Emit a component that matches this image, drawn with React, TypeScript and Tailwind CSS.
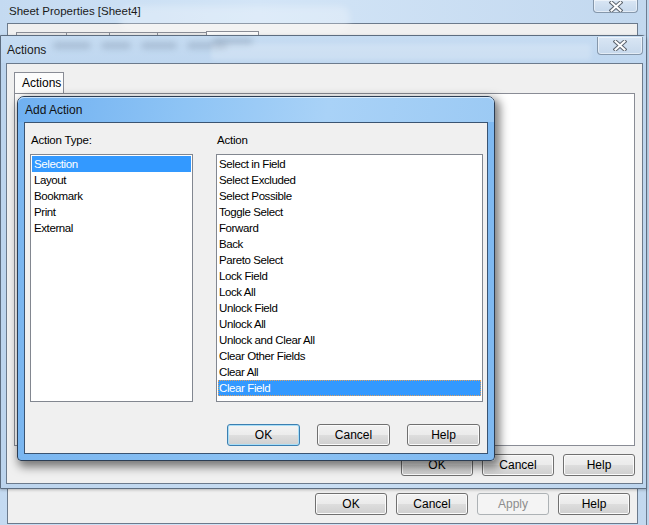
import React from 'react';

const FONT = "font-['Liberation_Sans',Arial,sans-serif]";

const actionTypes = ['Selection', 'Layout', 'Bookmark', 'Print', 'External'];
const actions = [
  'Select in Field',
  'Select Excluded',
  'Select Possible',
  'Toggle Select',
  'Forward',
  'Back',
  'Pareto Select',
  'Lock Field',
  'Lock All',
  'Unlock Field',
  'Unlock All',
  'Unlock and Clear All',
  'Clear Other Fields',
  'Clear All',
  'Clear Field',
];

type BtnKind = 'normal' | 'default' | 'disabled';

const Button: React.FC<{ label: string; kind?: BtnKind; wide?: boolean }> = ({ label, kind = 'normal', wide }) => {
  const base = `h-[22px] ${wide ? 'w-[73px]' : 'w-[72px]'} rounded-[3px] border text-[12px] leading-none flex items-center justify-center`;
  if (kind === 'disabled') {
    return <div className={`${base} border-[#adb2b5] bg-[#f4f4f4] text-[#8d8d8d]`}>{label}</div>;
  }
  if (kind === 'default') {
    return (
      <div className={`${base} border-[#3c7fb1] bg-[linear-gradient(#f4f4f4_0%,#ececec_48%,#dedede_52%,#d0d0d0_100%)] text-black shadow-[inset_0_0_0_1px_#a9def7]`}>
        {label}
      </div>
    );
  }
  return (
    <div className={`${base} border-[#707070] bg-[linear-gradient(#f2f2f2_0%,#ebebeb_48%,#dddddd_52%,#cfcfcf_100%)] text-black shadow-[inset_0_0_0_1px_#fbfbfb]`}>
      {label}
    </div>
  );
};

const CloseButton: React.FC<{ className?: string }> = ({ className = '' }) => (
  <div className={`flex items-center justify-center rounded-b-[4px] border border-t-0 border-[#8597ab] bg-[linear-gradient(#d9e6f4,#c6d8ec)] shadow-[inset_0_0_0_1px_rgba(255,255,255,0.5)] ${className}`}>
    <svg width="14" height="11" viewBox="0 0 14 11">
      <path d="M2.5 1.5 L11.5 9.5 M11.5 1.5 L2.5 9.5" stroke="#5e6670" strokeWidth="4" strokeLinecap="square" />
      <path d="M2.5 1.5 L11.5 9.5 M11.5 1.5 L2.5 9.5" stroke="#ffffff" strokeWidth="2" strokeLinecap="square" />
    </svg>
  </div>
);

const ListBox: React.FC<{ items: string[]; selected: string; focus?: boolean; width: string; indent: string }> = ({
  items,
  selected,
  focus,
  width,
  indent,
}) => (
  <div className={`${width} h-[248px] border border-[#828790] bg-white p-[1px]`}>
    {items.map(item => {
      const sel = item === selected;
      return (
        <div
          key={item}
          className={`h-[16px] ${indent} pt-[1px] flex items-center whitespace-nowrap text-[11.5px] tracking-[-0.4px] ${
            sel ? 'bg-[#3399ff] text-white' : 'text-black'
          } ${sel && focus ? 'outline-1 outline-dotted outline-[#e0a060] -outline-offset-1' : ''}`}
        >
          {item}
        </div>
      );
    })}
  </div>
);

export default function App() {
  return (
    <div className={`relative w-[649px] h-[525px] overflow-hidden bg-[#bfd5ec] ${FONT} text-[12px] text-black`}>
      {/* Sheet Properties (back window) */}
      <div className="absolute left-0 top-0 w-[647px] h-[534px] border-r border-[#6c7d92] bg-[linear-gradient(90deg,#c4daf1,#d3e5f7_40%,#c2d8ef)] flex flex-col">
        <div className="relative h-[23px] flex items-center pl-[9px]">
          <span className="relative z-10 text-[11.5px] text-[#1a1a1a]">Sheet Properties [Sheet4]</span>
          <div className="absolute left-[120px] top-[6px] w-[230px] h-[26px] rounded-[10px] bg-white/25 blur-[3px]" />
          <CloseButton className="absolute left-[593px] top-0 w-[45px] h-[13px]" />
        </div>
        <div className="ml-[7px] mr-[8px] h-[501px] border border-[#6b7a8c] bg-[#f0f0f0] flex flex-col">
          <div className="relative h-[13px]">
            <div className="absolute left-[8px] top-[8px] flex">
              {[50, 43, 48, 49].map((w, i) => (
                <div key={i} style={{ width: w }} className="h-[6px] border-l border-t border-[#898c95] bg-[#e8e8e8]" />
              ))}
              <div className="-mt-[1px] w-[53px] h-[7px] border border-b-0 border-[#898c95] bg-[#fafafa]" />
            </div>
          </div>
          <div className="flex-1" />
          <div className="flex justify-end gap-[9px] pr-[7px] pb-[8px]">
            <Button label="OK" />
            <Button label="Cancel" />
            <Button label="Apply" kind="disabled" />
            <Button label="Help" />
          </div>
        </div>
      </div>

      {/* Actions (middle window) */}
      <div className="absolute left-0 top-[35px] w-[647px] h-[454px] rounded-tr-[5px] border border-[#5d6d80] bg-[linear-gradient(90deg,#bcd4ed,#c9def3_50%,#bdd5ee)] shadow-[0_1px_3px_rgba(0,0,0,0.25)] flex flex-col">
        <div className="relative h-[27px] flex items-center pl-[6px] bg-[linear-gradient(#c6dcf2,#bfd7f0)]">
          <span className="relative z-10 text-[12px] text-[#1a1a1a]">Actions</span>
          <div className="absolute left-[52px] top-[6px] flex gap-[10px] opacity-40">
            {[38, 30, 36, 40].map((w, i) => (
              <div key={i} style={{ width: w }} className="h-[7px] rounded-full bg-[#7f93aa] blur-[3px]" />
            ))}
          </div>
          <div className="absolute left-[212px] top-[2px] w-[40px] h-[7px] rounded-full bg-[#7f93aa] opacity-40 blur-[3px]" />
          <div className="absolute left-[210px] top-[8px] w-[380px] h-[16px] rounded-[3px] bg-white/20 blur-[2px]" />
          <CloseButton className="absolute left-[596px] top-[1px] w-[46px] h-[18px]" />
        </div>
        <div className="ml-[5px] mr-[3px] h-[421px] border border-[#6b7a8c] bg-[#f0f0f0] flex flex-col px-[7px] pt-[8px]">
          <div className="flex">
            <div className="h-[21px] w-[50px] border border-b-0 border-[#898c95] bg-[#fcfcfc] flex items-center pl-[7px] text-[12px]">
              Actions
            </div>
          </div>
          <div className="h-[353px] border border-[#898c95] bg-white" />
          <div className="flex justify-end gap-[9px] pt-[8px]">
            <Button label="OK" />
            <Button label="Cancel" />
            <Button label="Help" />
          </div>
        </div>
      </div>

      {/* Add Action (front window) */}
      <div className="absolute left-[17px] top-[96px] w-[478px] h-[365px] rounded-t-[7px] rounded-b-[4px] border border-[#2b3d54] bg-[linear-gradient(90deg,#7ab6f0,#8cc2f3_50%,#7fb9f1)] shadow-[3px_4px_10px_2px_rgba(0,0,0,0.5)] flex flex-col">
        <div className="h-[25px] rounded-t-[6px] flex items-center pl-[7px] bg-[linear-gradient(100deg,#6fb0f1,#8ec4f5_35%,#a9d2f7_65%,#9ccaf4)] shadow-[inset_0_1px_0_rgba(255,255,255,0.6)]">
          <span className="text-[12px] text-[#111]">Add Action</span>
        </div>
        <div className="ml-[6px] mr-[6px] h-[332px] border border-[#3a5472] bg-[#f0f0f0] flex flex-col pl-[5px] pr-[5px] pt-[10px]">
          <div className="flex gap-[23px]">
            <div className="flex flex-col">
              <div className="h-[14px] pl-[1px] pt-[1px] flex items-center mb-[7px] text-[11.5px] tracking-[-0.2px]">Action Type:</div>
              <ListBox items={actionTypes} selected="Selection" width="w-[163px]" indent="pl-[2px]" />
            </div>
            <div className="flex flex-col">
              <div className="h-[14px] pl-[1px] pt-[1px] flex items-center mb-[7px] text-[11.5px] tracking-[-0.2px]">Action</div>
              <ListBox items={actions} selected="Clear Field" focus width="w-[267px]" indent="pl-[1px]" />
            </div>
          </div>
          <div className="flex justify-end gap-[17px] pt-[22px] pr-[2px]">
            <Button label="OK" kind="default" wide />
            <Button label="Cancel" wide />
            <Button label="Help" wide />
          </div>
        </div>
      </div>
    </div>
  );
}
